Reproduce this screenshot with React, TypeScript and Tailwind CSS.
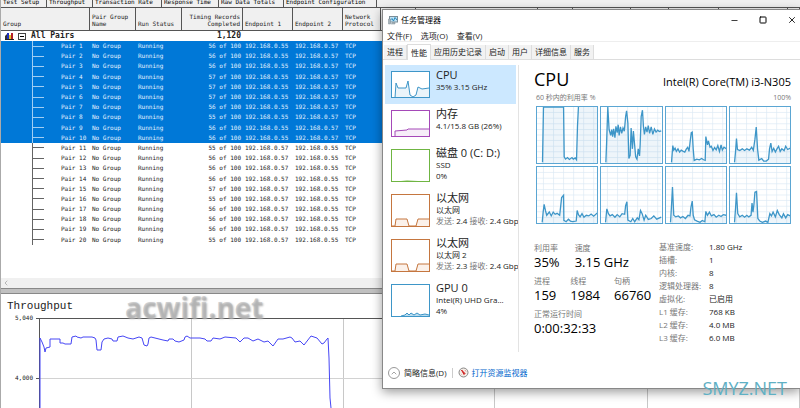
import React from "react";
import { ChevronLeft, ChevronUp, Minus, Square, X } from "lucide-react";

const setupTabs = [
  { name: "Test Setup", width: "w-[46px]" },
  { name: "Throughput", width: "w-[46px]" },
  { name: "Transaction Rate", width: "w-[69px]" },
  { name: "Response Time", width: "w-[57px]" },
  { name: "Raw Data Totals", width: "w-[65px]" },
  { name: "Endpoint Configuration", width: "w-[93px]" },
];

const completed = [
  56, 56, 56, 57, 57, 57, 56, 55, 56, 56, 55, 56, 56, 56, 57, 55, 56, 56, 56, 55,
];

const pairs = completed.map((done, i) => ({
  id: i + 1,
  done,
  selected: i < 10,
  from: i < 10 ? "192.168.0.55" : "192.168.0.57",
  to: i < 10 ? "192.168.0.57" : "192.168.0.55",
}));

const throughputLine =
  "40,90 40,20 42,24 44,29 45,34 46,30 50,29 50,21 60,21 60,25 63,25 65,26 71,26 72,19 76,18 77,19 81,20 83,19 92,19 95,20 96,22 97,32 101,32 102,24 104,21 108,20 112,21 113,23 117,23 118,19 123,18 128,20 133,21 139,19 142,20 144,27 147,28 148,26 149,20 151,19 155,20 163,22 168,23 169,21 173,21 175,23 179,24 184,22 185,19 187,18 190,20 200,20 205,21 207,23 211,23 213,20 220,21 225,19 236,20 240,24 244,20 248,20 253,23 258,21 264,24 268,23 273,28 278,21 283,21 290,19 292,20 295,24 300,23 304,27 311,18 317,20 322,26 324,25 327,21 328,20 329,40 330,80 331,90";

const coreLines = [
  "17,172 20,0 82,0 84,155 88,162 94,157 100,163 108,157 112,162 118,158 122,164 125,60 128,-2 186,-2",
  "15,172 17,120 21,0 25,70 30,88 33,70 36,92 39,68 43,95 46,60 50,80 53,55 56,88 60,62 64,82 68,65 72,75 76,30 79,12 83,50 86,160 90,150 93,65 97,130 100,75 104,120 107,155 111,162 115,130 119,152 121,115 124,30 128,10 131,60 134,85 138,62 142,78 146,58 150,82 155,62 160,85 165,68 170,78 175,72 180,76 186,74",
  "17,172 21,120 24,134 28,128 32,138 37,130 42,140 47,134 52,137 58,140 63,130 67,125 71,138 74,112 78,80 81,78 84,130 87,166 95,162 103,164 110,160 116,164 121,166 123,92 128,118 131,105 136,125 140,122 145,135 150,126 155,133 160,120 165,138 170,118 174,134 179,125 186,130",
  "14,172 17,140 20,98 23,132 30,135 38,130 45,135 52,130 60,134 67,125 72,135 77,100 81,62 85,130 89,165 98,160 104,168 112,168 119,162 122,130 126,112 130,138 135,128 140,140 145,130 150,122 155,138 160,130 167,136 172,122 178,132 186,128",
  "16,172 19,140 22,116 26,135 30,150 38,140 44,152 50,140 56,147 62,144 70,150 76,95 82,88 83,166 90,170 97,162 103,168 110,170 121,168 124,135 128,148 133,155 139,145 145,156 152,150 160,152 167,146 175,153 186,143",
  "14,172 18,130 23,145 28,152 35,148 43,156 50,148 58,155 65,145 73,147 76,120 80,108 83,165 92,170 98,160 104,170 112,158 117,164 122,135 127,145 133,165 138,150 146,163 155,160 163,152 172,162 186,156",
  "14,172 17,120 20,62 24,150 30,155 38,152 45,158 52,154 60,160 68,150 74,152 77,125 81,106 84,150 88,164 96,168 105,172 112,166 120,170 123,138 128,150 134,140 140,152 148,148 155,156 163,150 170,154 177,148 186,150",
  "14,172 17,130 20,80 24,145 30,155 38,150 45,156 52,150 58,155 65,150 68,112 71,140 74,115 77,78 82,76 86,160 92,168 100,172 110,168 117,172 123,145 128,152 133,140 140,155 146,135 152,148 160,158 165,145 172,158 178,148 186,152",
];

const managerTabs = ["进程", "性能", "应用历史记录", "启动", "用户", "详细信息", "服务"];

const facts = [
  ["基准速度:", "1.80 GHz"],
  ["插槽:", "1"],
  ["内核:", "8"],
  ["逻辑处理器:", "8"],
  ["虚拟化:", "已启用"],
  ["L1 缓存:", "768 KB"],
  ["L2 缓存:", "4.0 MB"],
  ["L3 缓存:", "6.0 MB"],
];

type ResourceProps = {
  name: string;
  color: string;
  fill: string;
  line: string;
  tall?: boolean;
  active?: boolean;
  children: React.ReactNode;
};

const Resource: React.FC<ResourceProps> = ({
  name,
  color,
  fill,
  line,
  tall,
  active,
  children,
}) => {
  const height = tall ? 33 : 27;
  return (
    <button
      className={`flex w-full items-start gap-[6px] overflow-hidden px-[6px] py-[6px] text-left ${
        tall ? "h-[45px]" : "h-[39px]"
      } ${active ? "bg-[#cce8ff]" : ""}`}
    >
      <svg width="39" height={height} className="shrink-0 bg-white">
        <polygon points={`${line} 38,${height} 4,${height}`} fill={fill} />
        <polyline points={line} fill="none" stroke={color} strokeWidth="1" />
        <rect
          x="0.5"
          y="0.5"
          width="38"
          height={height - 1}
          fill="none"
          stroke={color}
        />
      </svg>
      <span className="-mt-[2px] block whitespace-nowrap text-[8px] leading-[11px] text-[#222]">
        <span className="block text-[11px] leading-[12px]">{name}</span>
        {children}
      </span>
    </button>
  );
};

const CoreChart: React.FC<{ line: string }> = ({ line }) => (
  <svg
    viewBox="0 0 186 174"
    preserveAspectRatio="none"
    className="h-[58px] w-full border border-[#5ba6d3] bg-white"
  >
    {[20, 51, 82, 113, 144, 175].map((x) => (
      <line key={x} x1={x} x2={x} y1="0" y2="174" stroke="#dbeaf4" strokeWidth="2" />
    ))}
    {[17, 35, 52, 70, 87, 104, 122, 139, 157].map((y) => (
      <line key={y} x1="0" x2="186" y1={y} y2={y} stroke="#dbeaf4" strokeWidth="2" />
    ))}
    <polygon points={`${line} 186,174 14,174`} fill="#1178b8" fillOpacity="0.07" />
    <polyline points={line} fill="none" stroke="#3e96c8" strokeWidth="4" />
  </svg>
);

const Stat: React.FC<{ label: string; value: string }> = ({ label, value }) => (
  <div>
    <dt className="text-[8px] leading-[13px] text-[#777]">{label}</dt>
    <dd className="text-[13px] leading-[17px] text-black">{value}</dd>
  </div>
);

const PairTable: React.FC = () => (
  <table className="h-[238px] w-full table-fixed border-separate border-spacing-0 whitespace-nowrap text-left">
    <colgroup>
      <col className="w-[32px]" />
      <col className="w-[57px]" />
      <col className="w-[46px]" />
      <col className="w-[46px]" />
      <col className="w-[61px]" />
      <col className="w-[50px]" />
      <col className="w-[50px]" />
      <col className="w-[38px]" />
      <col className="w-[35px]" />
      <col className="w-[122px]" />
      <col className="w-[35px]" />
      <col className="w-[58px]" />
      <col className="w-[38px]" />
      <col className="w-[50px]" />
      <col className="w-[69px]" />
      <col />
    </colgroup>
    <thead>
      <tr className="h-[24px] bg-[#f0f0f0] align-bottom leading-[7px] [&>th]:border-y [&>th]:border-r [&>th]:border-[#555] [&>th]:px-[2px] [&>th]:pb-[3px] [&>th]:font-normal">
        <th colSpan={2}>Group</th>
        <th>
          Pair Group
          <br />
          Name
        </th>
        <th>Run Status</th>
        <th className="text-right">
          Timing Records
          <br />
          Completed
        </th>
        <th>Endpoint 1</th>
        <th>Endpoint 2</th>
        <th>
          Network
          <br />
          Protocol
        </th>
        <th />
        <th />
        <th />
        <th />
        <th />
        <th />
        <th />
        <th />
      </tr>
    </thead>
    <tbody>
      <tr className="h-[10px] text-[8px] font-bold leading-[10px]">
        <td colSpan={4}>
          <div className="flex items-center">
            <svg width="9" height="8" className="ml-[4px]">
              <path d="M0 4 L2 2 L2 8 L0 8 Z" fill="#333" />
              <rect x="2" y="1" width="2" height="7" fill="#1d2fc0" />
              <rect x="4" y="3" width="2" height="5" fill="#e3c62a" />
              <rect x="6" y="1" width="2" height="7" fill="#b3202a" />
              <rect x="0" y="7" width="9" height="1" fill="#222" />
            </svg>
            <button
              aria-label="Collapse"
              className="ml-[4px] mr-[5px] flex h-[7px] w-[8px] items-center justify-center border border-[#444]"
            >
              <span className="h-px w-[4px] bg-black" />
            </button>
            All Pairs
          </div>
        </td>
        <td className="px-[2px] text-right">1,120</td>
        <td colSpan={11} />
      </tr>
      {pairs.map((pair) => (
        <tr
          key={pair.id}
          className={`leading-[10px] [&>td]:px-[2px] ${
            pair.selected ? "bg-[#0078d7] text-[#e4f2ff]" : "text-[#222]"
          }`}
        >
          <td className="border-r border-current/70" />
          <td>
            <div className="-ml-[2px] flex items-center gap-[17px]">
              <span className="h-px w-[11px] bg-current/70" />
              Pair {pair.id}
            </div>
          </td>
          <td>No Group</td>
          <td>Running</td>
          <td className="text-right">{pair.done} of 100</td>
          <td>{pair.from}</td>
          <td>{pair.to}</td>
          <td>TCP</td>
          <td colSpan={8} />
        </tr>
      ))}
    </tbody>
  </table>
);

const Throughput: React.FC = () => (
  <section className="relative min-h-0 flex-1 bg-white">
    <h2 className="pl-[6px] pt-[4px] font-['Liberation_Mono',monospace] text-[11px] leading-[16px] text-[#222]">
      Throughput
    </h2>
    <div className="flex">
      <div className="w-[35px] pr-[3px] text-right leading-[8px]">
        <p>5,040</p>
        <p className="pt-[52px]">4,000</p>
      </div>
      <svg className="mt-[4px] h-[90px] min-w-0 flex-1">
        <g transform="translate(-36 0)" fill="none">
          {[191, 343, 494, 647, 799].map((x) => (
            <path key={x} d={`M${x}.5 0V90`} stroke="#c8c8c8" />
          ))}
          <path d="M40 60.5H800" stroke="#d2d2d2" />
          <path d="M36 0.5H800M36 60.5H40M39.5 0V90" stroke="#555" />
          <polyline points={throughputLine} stroke="#4646f5" />
        </g>
      </svg>
    </div>
    <div className="absolute left-[124px] top-[-5px] font-['Open_Sans'] text-[28px] font-bold leading-[36px] text-[#aaa]/50 [text-shadow:1px_1px_2px_#bbb]">
      acwifi.net
    </div>
  </section>
);

const TaskManager: React.FC = () => (
  <div className="absolute bottom-[19px] left-[381px] right-0 top-[9px] flex flex-col border border-r-0 border-[#888] bg-white font-['Open_Sans','Noto_Sans_CJK_SC',sans-serif] text-[8px] leading-[12px] text-[#222] shadow-[0_3px_10px_rgba(0,0,0,0.4)]">
    <header className="flex h-[20px] items-center pl-[5px]">
      <svg width="10" height="9" viewBox="0 0 20 18">
        <rect x="3" y="1" width="16" height="11" fill="#bfe3f5" stroke="#7b8d97" strokeWidth="2" />
        <path d="M4 9L8 5L11 10L14 3L18 8" fill="none" stroke="#2687bd" strokeWidth="2" />
        <path d="M8 13H14V16H6M1 6V16H5V6Z" fill="#aab4ba" stroke="#7b8d97" />
      </svg>
      <h1 className="ml-[3px] text-black">任务管理器</h1>
      <div className="ml-auto flex gap-[20px] pr-[3px] text-black">
        <button aria-label="Minimize">
          <Minus size={9} strokeWidth={2} />
        </button>
        <button aria-label="Maximize">
          <Square size={8} strokeWidth={3} />
        </button>
        <button aria-label="Close">
          <X size={10} strokeWidth={2} />
        </button>
      </div>
    </header>
    <nav className="flex h-[12px] items-center gap-[9px] border-b border-[#eee] pl-[4px]">
      <button>文件(F)</button>
      <button>选项(O)</button>
      <button>查看(V)</button>
    </nav>
    <div role="tablist" className="flex h-[18px] items-end border-b border-[#ddd] pl-px">
      {managerTabs.map((tab) => (
        <button
          key={tab}
          role="tab"
          aria-selected={tab === "性能"}
          className={
            tab === "性能"
              ? "-mb-px h-[16px] border border-b-0 border-[#ddd] bg-white px-[3px]"
              : "h-[14px] border-r border-[#ddd] bg-[#f2f2f2] px-[3px]"
          }
        >
          {tab}
        </button>
      ))}
    </div>
    <div className="flex min-h-0 flex-1">
      <aside className="my-[5px] ml-[2px] w-[134px] overflow-hidden border-r border-[#e3e3e3]">
        <div className="w-[131px]">
          <Resource
            name="CPU"
            color="#3e96c8"
            fill="#eaf4fa"
            line="4,27 5,12 7,17 15,17 17,10 19,24 22,26 25,24 27,16 31,18 38,17"
            active
          >
            35% 3.15 GHz
          </Resource>
          <Resource
            name="内存"
            color="#a549b8"
            fill="#f6eef8"
            line="4,27 4,21 16,20 17,19 38,19"
          >
            4.1/15.8 GB (26%)
          </Resource>
        </div>
        <Resource
          name="磁盘 0 (C: D:)"
          color="#6fb542"
          fill="#f0f8ec"
          line="4,33 16,32 38,33"
          tall
        >
          <span className="block">SSD</span>0%
        </Resource>
        <Resource
          name="以太网"
          color="#c5763f"
          fill="#fbf1ea"
          line="0,32 4,32 5,25 16,25 18,32 25,32 27,25 38,25"
          tall
        >
          <span className="block">以太网</span>
          <span className="text-[#777]">发送:</span> 2.4{" "}
          <span className="text-[#777]">接收:</span> 2.4 Gbps
        </Resource>
        <Resource
          name="以太网"
          color="#c5763f"
          fill="#fbf1ea"
          line="0,32 4,32 5,25 16,25 18,32 25,32 27,25 38,25"
          tall
        >
          <span className="block">以太网 2</span>
          <span className="text-[#777]">发送:</span> 2.3{" "}
          <span className="text-[#777]">接收:</span> 2.4 Gbps
        </Resource>
        <Resource
          name="GPU 0"
          color="#3e96c8"
          fill="#b9dcef"
          line="10,32 14,31 16,29 18,31 20,29 23,31 26,29 29,31 34,30 38,31"
          tall
        >
          <span className="block">Intel(R) UHD Gra...</span>4%
        </Resource>
      </aside>
      <main className="min-w-0 flex-1 pl-[15px] pr-[9px] pt-[6px]">
        <div className="flex h-[26px] items-center justify-between text-black">
          <h2 className="text-[18px]">CPU</h2>
          <p className="pt-[5px] text-[11px]">Intel(R) Core(TM) i3-N305</p>
        </div>
        <div className="flex justify-between pl-[2px] text-[7px] text-[#777]">
          <span>60 秒内的利用率 %</span>
          <span>100%</span>
        </div>
        <div className="ml-[2px] mt-[2px] grid grid-cols-4 gap-[2px]">
          {coreLines.map((line) => (
            <CoreChart key={line} line={line} />
          ))}
        </div>
        <div className="mt-[17px] flex">
          <div className="flex w-[125px] shrink-0 flex-col gap-[3px]">
            <dl className="flex gap-[15px]">
              <Stat label="利用率" value="35%" />
              <Stat label="速度" value="3.15 GHz" />
            </dl>
            <dl className="flex gap-[14px]">
              <Stat label="进程" value="159" />
              <Stat label="线程" value="1984" />
              <Stat label="句柄" value="66760" />
            </dl>
            <dl>
              <Stat label="正常运行时间" value="0:00:32:33" />
            </dl>
          </div>
          <dl className="grid auto-rows-[13px] grid-cols-[50px_1fr]">
            {facts.map(([label, value]) => (
              <React.Fragment key={label}>
                <dt className="text-[#777]">{label}</dt>
                <dd>{value}</dd>
              </React.Fragment>
            ))}
          </dl>
        </div>
      </main>
    </div>
    <footer className="flex h-[31px] shrink-0 items-center pl-[5px]">
      <button className="flex items-center gap-[4px]">
        <span className="flex h-[12px] w-[12px] items-center justify-center rounded-full border border-[#999] text-[#777]">
          <ChevronUp size={8} />
        </span>
        简略信息(D)
      </button>
      <span className="mx-[5px] h-[10px] w-px bg-[#ccc]" />
      <a href="#" className="flex items-center gap-[3px] text-[#0066cc]">
        <svg width="11" height="11" viewBox="0 0 22 22">
          <circle cx="11" cy="11" r="9" fill="#f4ece6" stroke="#888" strokeWidth="2" />
          <path d="M7 6L14 13L12 15Z" fill="#d02020" stroke="#d02020" strokeWidth="2" />
          <path d="M14 6L16 9M6 14L7 15" stroke="#d99" strokeWidth="2" />
        </svg>
        打开资源监视器
      </a>
    </footer>
  </div>
);

const App: React.FC = () => {
  return (
    <div className="relative flex h-screen flex-col overflow-hidden border-l border-[#aaa] bg-[#f0f0f0] font-['DejaVu_Sans_Mono','Liberation_Mono',monospace] text-[6px] text-[#222]">
      <nav className="flex h-[7px] shrink-0 items-end overflow-hidden">
        {setupTabs.map((tab) => (
          <button
            key={tab.name}
            className={`h-[9px] shrink-0 whitespace-nowrap border-r border-[#555] pb-[2px] pl-[2px] text-left leading-[7px] text-black ${tab.width}`}
          >
            {tab.name}
          </button>
        ))}
      </nav>
      <section className="h-[271px] shrink-0 bg-white">
        <PairTable />
      </section>
      <div className="flex h-[10px] shrink-0 items-center pl-px text-[#999]">
        <button aria-label="Scroll left">
          <ChevronLeft size={8} />
        </button>
      </div>
      <div className="h-[6px] shrink-0 border-y border-[#888] bg-[#c0c0c0]" />
      <Throughput />
      <TaskManager />
      <div className="absolute bottom-[8px] right-[13px] font-['Open_Sans'] text-[18px] leading-[24px] text-[#5fb0c4]">
        SMYZ.NET
      </div>
    </div>
  );
};

export default App;
